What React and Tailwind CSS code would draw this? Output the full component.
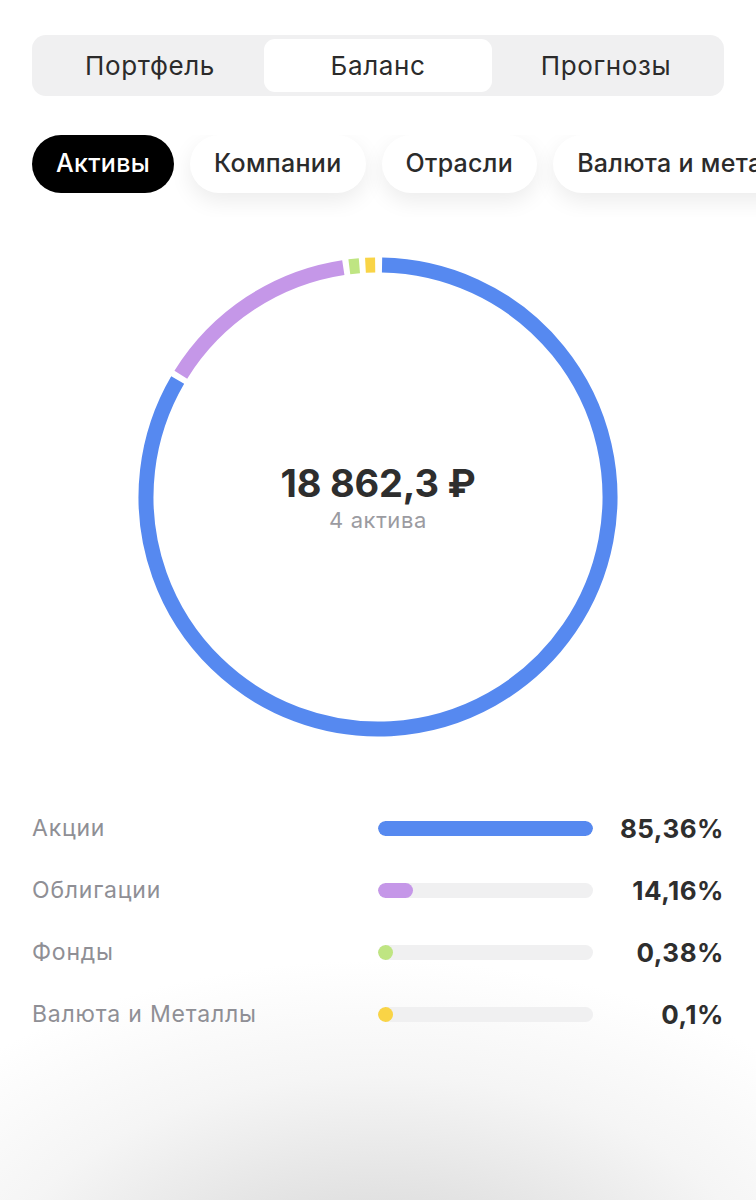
import React from 'react';

const tabs = ['Портфель', 'Баланс', 'Прогнозы'];
const chips = ['Активы', 'Компании', 'Отрасли', 'Валюта и металлы'];

// donut segments, degrees clockwise from 12 o'clock
const segments = [
    { from: 1, to: 300.3, color: '#5689f0' },
    { from: 301.8, to: 351.4, color: '#c597e8' },
    { from: 352.9, to: 355.4, color: '#bfe582' },
    { from: 356.9, to: 359.3, color: '#f9d446' }
];

const rows = [
    { label: 'Акции', value: '85,36%', width: 215, color: 'bg-[#5689f0]' },
    { label: 'Облигации', value: '14,16%', width: 35, color: 'bg-[#c597e8]' },
    { label: 'Фонды', value: '0,38%', width: 15, color: 'bg-[#bfe582]' },
    { label: 'Валюта и Металлы', value: '0,1%', width: 15, color: 'bg-[#f9d446]' }
];

const C = 245;
const R = 232;

const point = (deg) => {
    const a = (deg * Math.PI) / 180;
    return [C + R * Math.sin(a), C - R * Math.cos(a)];
};

const arcPath = (from, to) => {
    const [x1, y1] = point(from);
    const [x2, y2] = point(to);
    const large = to - from > 180 ? 1 : 0;
    return `M ${x1} ${y1} A ${R} ${R} 0 ${large} 1 ${x2} ${y2}`;
};

const Donut = () => (
    <div className="relative w-[490px] h-[490px] mx-auto">
        <svg width="490" height="490" viewBox="0 0 490 490">
            {segments.map((s, i) => (
                <path key={i} d={arcPath(s.from, s.to)} stroke={s.color} strokeWidth="15" fill="none" />
            ))}
        </svg>
        <div className="absolute inset-0 flex flex-col items-center justify-center">
            <div className="text-[38px] leading-[46px] font-bold text-[#2e2e2e] tracking-[-0.2px]">18 862,3 ₽</div>
            <div className="text-[22px] leading-[28px] tracking-[0.6px] text-[#9b9ba1]">4 актива</div>
        </div>
    </div>
);

export default function App() {
    return (
        <div
            className="w-[756px] h-[1200px] overflow-hidden bg-white bg-[radial-gradient(ellipse_580px_360px_at_50%_110%,#cfcfcf_0%,#e4e4e4_38%,#f5f5f5_68%,#ffffff_100%)] pt-[35px] pl-8"
            style={{ fontFamily: 'Inter, "Noto Sans", "DejaVu Sans", sans-serif' }}
        >
            {/* segmented control */}
            <div className="w-[692px] h-[61px] rounded-[14px] bg-[#f0f0f1] p-1 grid grid-cols-3">
                {tabs.map((t, i) => (
                    <div
                        key={t}
                        className={`flex items-center justify-center rounded-[11px] text-[26px] tracking-[0.6px] text-[#2b2b2b] ${i === 1 ? 'bg-white' : ''}`}
                    >
                        {t}
                    </div>
                ))}
            </div>

            {/* chips */}
            <div className="mt-[39px] flex gap-4 overflow-hidden pb-6 -mb-6">
                {chips.map((c, i) => (
                    <div
                        key={c}
                        className={`flex-none h-[58px] px-6 rounded-full flex items-center text-[25px] tracking-[0.3px] font-medium ${
                            i === 0
                                ? 'bg-black text-white'
                                : 'bg-white text-[#2b2b2b] shadow-[0_8px_22px_rgba(0,0,0,0.08)]'
                        }`}
                    >
                        {c}
                    </div>
                ))}
            </div>

            {/* donut */}
            <div className="mt-[59px] w-[692px]">
                <Donut />
            </div>

            {/* legend */}
            <div className="mt-[55px] w-[692px] flex flex-col">
                {rows.map((r) => (
                    <div key={r.label} className="h-[62px] flex items-center">
                        <div className="w-[346px] text-[23px] tracking-[0.8px] text-[#8f8f95]">{r.label}</div>
                        <div className="w-[215px] h-[15px] rounded-full bg-[#f0f0f1] overflow-hidden">
                            <div className={`h-full rounded-full ${r.color}`} style={{ width: r.width }} />
                        </div>
                        <div className="flex-1 text-right text-[26px] tracking-[0.5px] font-bold text-[#2e2e2e]">{r.value}</div>
                    </div>
                ))}
            </div>
        </div>
    );
}
